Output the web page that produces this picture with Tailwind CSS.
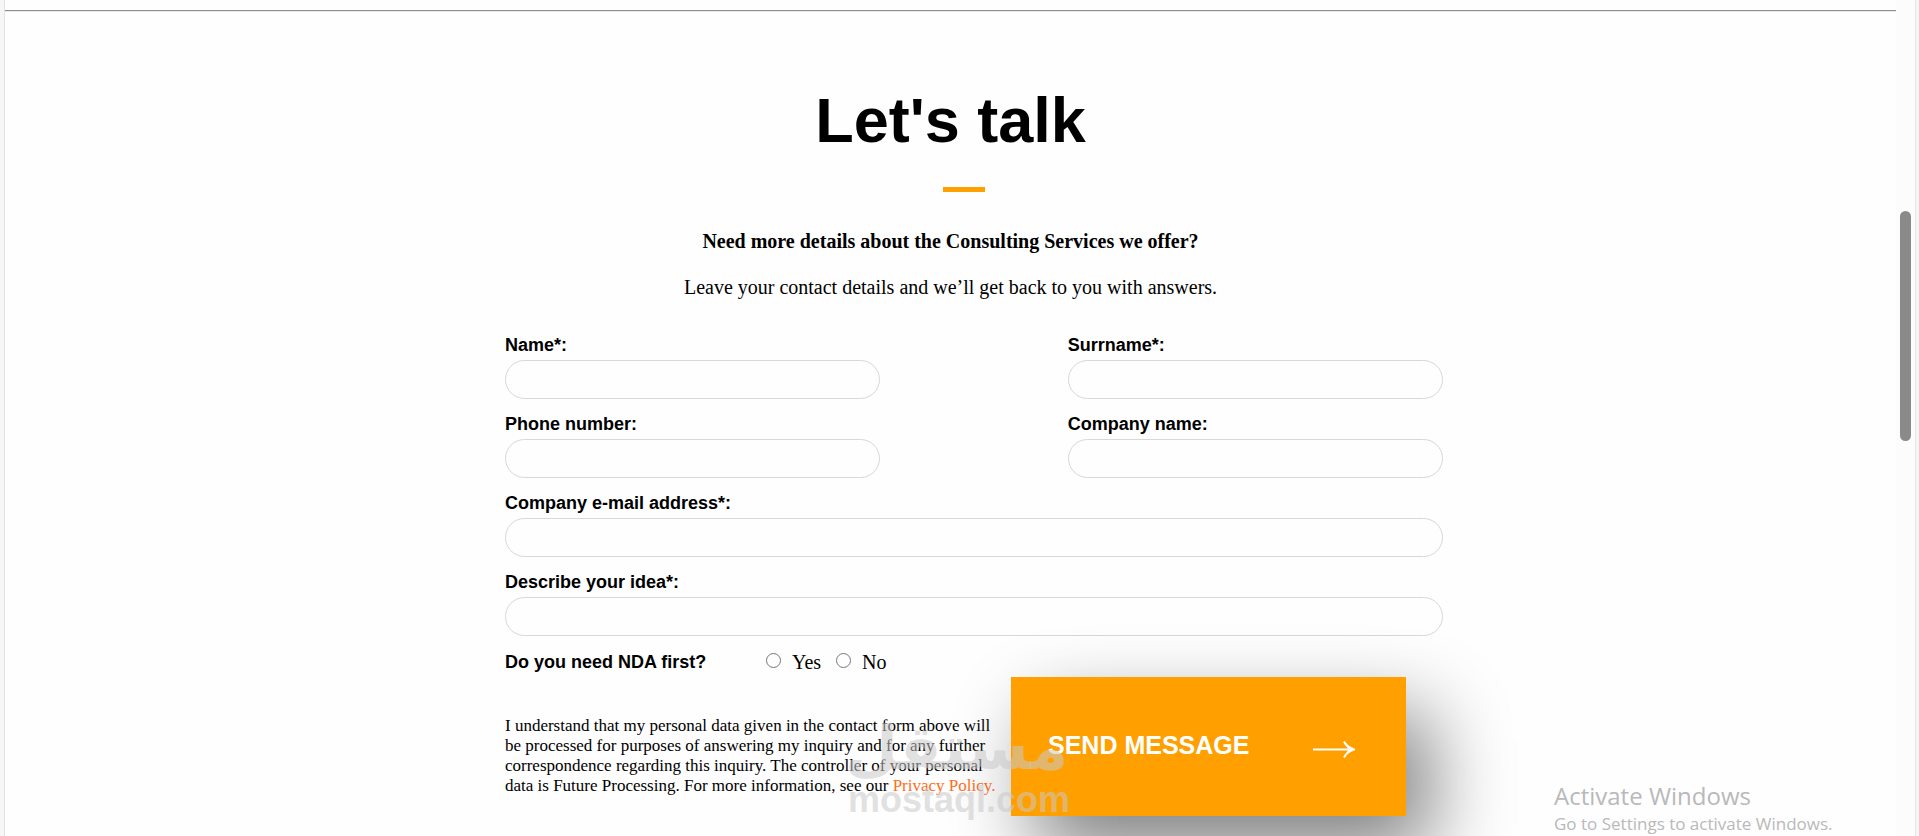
<!DOCTYPE html>
<html lang="en">
<head>
  <meta charset="UTF-8" />
  <meta name="viewport" content="width=device-width, initial-scale=1.0" />
  <title>Let's talk</title>
  <script src="https://cdn.jsdelivr.net/npm/@tailwindcss/browser@4"></script>
</head>
<body class="flex h-screen overflow-hidden bg-[#f6f6f6] pl-1 pr-[3px] font-['Liberation_Serif',serif] text-black">

  <main class="min-w-0 flex-1 overflow-hidden border-l border-[#e2e2e2] bg-[#fefefe] pt-[10px]">
    <hr class="h-0.5 border-t border-b border-t-[#909090] border-b-[#e8e8e8]" />

    <!-- Heading -->
    <header class="pt-[72px] text-center">
      <h1 class="font-['Liberation_Sans',sans-serif] text-[63px] leading-[72px] font-bold">Let's talk</h1>
      <div class="flex justify-center pt-[31px] pl-[27px]">
        <div class="h-[5px] w-[42px] bg-[#ffa000]"></div>
      </div>
      <p class="mt-[37px] text-[20px] leading-6 font-bold">Need more details about the Consulting Services we offer?</p>
      <p class="mt-[22px] text-[20px] leading-6">Leave your contact details and we’ll get back to you with answers.</p>
    </header>

    <!-- Contact form -->
    <div class="pt-[33px] pl-[47px]">
      <form class="mx-auto max-w-[938px]">
        <div class="grid grid-cols-5 gap-y-3 font-['Liberation_Sans',sans-serif] text-[18px] leading-[26px]">
          <div class="col-span-2">
            <label for="name" class="mb-0.5 block font-bold">Name*:</label>
            <input type="text" id="name" class="block h-[39px] w-full rounded-full border border-[#d8d8d8] px-4" />
          </div>
          <div class="col-span-2 col-start-4">
            <label for="surname" class="mb-0.5 block font-bold">Surrname*:</label>
            <input type="text" id="surname" class="block h-[39px] w-full rounded-full border border-[#d8d8d8] px-4" />
          </div>
          <div class="col-span-2">
            <label for="phone" class="mb-0.5 block font-bold">Phone number:</label>
            <input type="tel" id="phone" class="block h-[39px] w-full rounded-full border border-[#d8d8d8] px-4" />
          </div>
          <div class="col-span-2 col-start-4">
            <label for="company" class="mb-0.5 block font-bold">Company name:</label>
            <input type="text" id="company" class="block h-[39px] w-full rounded-full border border-[#d8d8d8] px-4" />
          </div>
          <div class="col-span-5">
            <label for="email" class="mb-0.5 block font-bold">Company e-mail address*:</label>
            <input type="email" id="email" class="block h-[39px] w-full rounded-full border border-[#d8d8d8] px-4" />
          </div>
          <div class="col-span-5">
            <label for="idea" class="mb-0.5 block font-bold">Describe your idea*:</label>
            <input type="text" id="idea" class="block h-[39px] w-full rounded-full border border-[#d8d8d8] px-4" />
          </div>
        </div>

        <fieldset class="mt-[13px] flex items-center leading-[26px]">
          <legend class="float-left w-[261px] font-['Liberation_Sans',sans-serif] text-[18px] font-bold">Do you need NDA first?</legend>
          <input type="radio" id="nda-yes" name="nda" class="mb-1 size-[15px] appearance-none rounded-full border border-[#767676] checked:border-4" />
          <label for="nda-yes" class="ml-[11px] text-[20px]">Yes</label>
          <input type="radio" id="nda-no" name="nda" class="mb-1 ml-[15px] size-[15px] appearance-none rounded-full border border-[#767676] checked:border-4" />
          <label for="nda-no" class="ml-[11px] text-[20px]">No</label>
        </fieldset>

        <div class="flex items-start justify-between pt-0.5 pr-[37px]">
          <p class="w-[500px] pt-[39px] text-[17px] leading-5">I understand that my personal data given in the contact form above will be processed for purposes of answering my inquiry and for any further correspondence regarding this inquiry. The controller of your personal data is Future Processing. For more information, see our <a href="#" class="text-[#ff6e19]">Privacy Policy.</a></p>
          <button type="submit" class="flex h-[139px] w-[395px] items-center justify-between bg-[#ffa000] pr-[51px] pl-[37px] font-['Liberation_Sans',sans-serif] text-[25px] font-bold text-white shadow-[24px_36px_80px_#808080]">
            <span class="pb-0.5">SEND MESSAGE</span>
            <svg class="mt-1.5 h-[17px] w-[42px]" viewBox="0 0 42 17" fill="none" stroke="currentColor">
              <path d="M0 8.500H39" stroke-width="2" />
              <path d="M31 0.500Q33.500 6 41 8.500Q33.500 11 31 16.500" stroke-width="2" />
              <path d="M33 4.500L41 8.500L33 12.500L35.500 8.500Z" fill="currentColor" stroke="none" />
            </svg>
          </button>
        </div>
      </form>
    </div>
  </main>

  <!-- Scrollbar -->
  <aside class="w-5 shrink-0 border-r border-[#e6e6e6] bg-[#fcfcfc] pt-[211px] pl-1">
    <div class="h-[230px] w-[11px] rounded-full bg-[#8a8a8a]"></div>
  </aside>

  <!-- Watermark -->
  <div class="pointer-events-none absolute top-[712px] left-[848px] w-[220px] text-center font-bold whitespace-nowrap text-[#c8c8c8]/55">
    <div lang="ar" dir="rtl" class="font-['DejaVu_Sans',sans-serif] text-[61px] leading-[72px]">مستقل</div>
    <div class="font-['Liberation_Sans',sans-serif] text-[36px] leading-8">mostaql.com</div>
  </div>

  <!-- Activation notice -->
  <div class="pointer-events-none absolute right-[80px] bottom-0 w-[285px] font-['Open_Sans',sans-serif] whitespace-nowrap text-[#b9b9b9]">
    <p class="text-[24px] leading-8">Activate Windows</p>
    <p class="text-[17px] leading-6">Go to Settings to activate Windows.</p>
  </div>

</body>
</html>
